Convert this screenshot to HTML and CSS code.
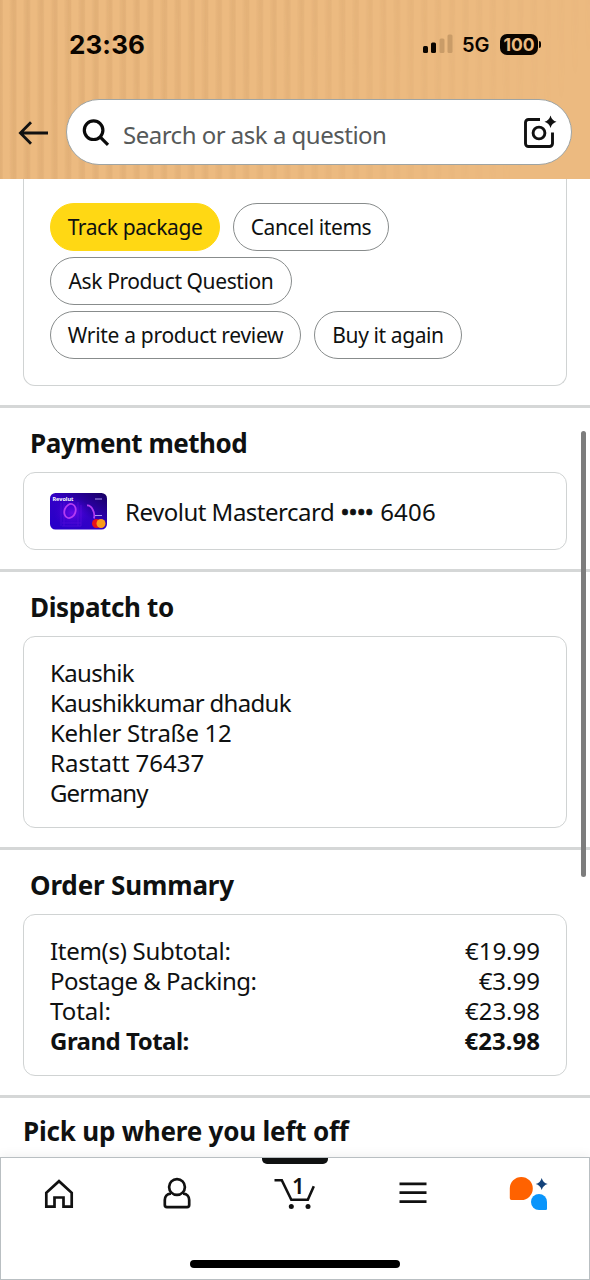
FILE: index.html
```html
<!DOCTYPE html>
<html lang="en">
<head>
<meta charset="utf-8">
<title>Order details</title>
<link rel="stylesheet" href="styles.css">
</head>
<body>
<div class="screen">
  <header class="header">
    <div class="status">
      <span class="clock">23:36</span>
      <div class="indicators">
        <svg class="signal" width="30" height="20" viewBox="0 0 30 20"><rect x="0" y="12" width="5" height="7" rx="1.5"/><rect x="8" y="8.500" width="5" height="10.500" rx="1.500"/><g fill="#c99c68"><rect x="16.500" y="4.500" width="5" height="14.500" rx="1.500"/><rect x="24.500" y="0.500" width="5" height="18.500" rx="1.500"/></g></svg>
        <span class="network">5G</span>
        <span class="battery">100</span><i class="battery-tip"></i>
      </div>
    </div>
    <div class="search-row">
      <svg class="back" width="30" height="24" viewBox="0 0 30 24"><path d="M13 1.200 2.400 12 13 22.800M2.400 12H30" fill="none" stroke="#111" stroke-width="2.800"/></svg>
      <div class="search">
        <svg class="lens" width="28" height="28" viewBox="0 0 28 28"><g fill="none" stroke="#0a0a0a" stroke-width="3.200"><circle cx="11.600" cy="11.200" r="9.300"/><path d="m17.800 17.600 8.200 8.200"/></g></svg>
        <span class="placeholder">Search or ask a question</span>
        <svg class="camera" width="34" height="34" viewBox="0 0 34 34"><g fill="none" stroke="#111" stroke-width="2.900"><path d="M17 4.500H5.500a3 3 0 0 0-3 3v21a3 3 0 0 0 3 3h21a3 3 0 0 0 3-3V17.500"/><circle cx="16" cy="18" r="5.900"/></g><path d="M27.500 0.500q1.300 5 6 6.300-4.700 1.300-6 6.300-1.300-5-6-6.300 4.700-1.300 6-6.300z" fill="#111"/></svg>
      </div>
    </div>
  </header>

  <main class="content">
    <div class="card actions">
      <div class="action-row"><button class="pill primary track">Track package</button><button class="pill cancel">Cancel items</button></div>
      <div class="action-row"><button class="pill ask">Ask Product Question</button></div>
      <div class="action-row"><button class="pill review">Write a product review</button><button class="pill again">Buy it again</button></div>
    </div>

    <section class="section">
      <h2 class="h-payment">Payment method</h2>
      <div class="card payment">
        <svg class="bankcard" width="58" height="37" viewBox="0 0 58 37">
          <defs>
            <linearGradient id="cardFill" x1="0" x2="1" y1="1" y2="0"><stop offset="0" stop-color="#2500c9"/><stop offset=".5" stop-color="#3400c6"/><stop offset="1" stop-color="#16005e"/></linearGradient>
            <radialGradient id="glow"><stop offset="0" stop-color="#6a08e8"/><stop offset="1" stop-color="#3a00d0" stop-opacity="0"/></radialGradient>
          </defs>
          <rect width="57" height="36.500" rx="5.500" fill="url(#cardFill)"/>
          <ellipse cx="22" cy="20" rx="18" ry="16" fill="url(#glow)"/>
          <path d="M11 10v23M14 9v24M28 9v24M31 12v21M12 30h19M12 33h19" stroke="#6412df" stroke-width=".7" opacity=".7"/>
          <ellipse cx="20" cy="18" rx="5.500" ry="7.200" transform="rotate(20 20 18)" fill="none" stroke="#b43cf2" stroke-width="1.800"/>
          <path d="M37 12.500c4.500-.5 8.500 7 7 13" fill="none" stroke="#b43cf2" stroke-width="1.800"/>
          <text x="2.500" y="7.800" class="brand">Revolut</text>
          <path d="M45 6h7M45 22.500h7" stroke="#a997ee" stroke-width="1"/>
          <circle cx="46.500" cy="30.500" r="4.500" fill="#e6111b"/><circle cx="51" cy="30.500" r="4.500" fill="#f99b19"/>
        </svg>
        <span class="card-name"><span class="tight-5">Revolut Mastercard</span> <span class="dots">••••</span> <span class="digits">6406</span></span>
      </div>
    </section>

    <section class="section">
      <h2 class="h-dispatch">Dispatch to</h2>
      <div class="card lines">
        <div><span class="tight-7">Kaushik</span></div>
        <div><span class="tight-7">Kaushikkumar dhaduk</span></div>
        <div><span class="tight-3">Kehler Straße 12</span></div>
        <div><span>Rastatt 76437</span></div>
        <div><span class="tight-8">Germany</span></div>
      </div>
    </section>

    <section class="section">
      <h2 class="h-summary">Order Summary</h2>
      <div class="card lines">
        <div><span class="tight-3">Item(s) Subtotal:</span><span>€19.99</span></div>
        <div><span class="tight-5">Postage &amp; Packing:</span><span>€3.99</span></div>
        <div><span>Total:</span><span>€23.98</span></div>
        <div class="grand"><span class="tight-5">Grand Total:</span><span>€23.98</span></div>
      </div>
    </section>

    <section class="section pickup">
      <h2 class="h-pickup">Pick up where you left off</h2>
    </section>
  </main>

  <nav class="tabs">
    <div class="tab"><svg width="40" height="40" viewBox="0 0 40 40"><path d="M7.300 33.700V19.800L20 8.200l12.700 11.600v13.900h-8.200V24.500h-9v9.200z" fill="none" stroke="#111" stroke-width="2.700"/></svg></div>
    <div class="tab"><svg width="40" height="40" viewBox="0 0 40 40"><g fill="none" stroke="#111" stroke-width="2.700"><circle cx="20" cy="14" r="7.900"/><path d="M14 20.600h-.5c-3.500.3-5.700 3-5.700 6.500v5a2.100 2.100 0 0 0 2.100 2.100h20.200a2.100 2.100 0 0 0 2.100-2.100v-5c0-3.500-2.200-6.200-5.700-6.500H26"/></g></svg></div>
    <div class="tab active"><svg width="44" height="40" viewBox="0 0 44 40"><path d="M1.500 7.300h7.300l9.500 19.400h16.500l6-13.400" fill="none" stroke="#111" stroke-width="2.600"/><circle cx="18.300" cy="33.400" r="2.500" fill="#111"/><circle cx="35" cy="33.400" r="2.500" fill="#111"/></svg><span class="count">1</span></div>
    <div class="tab"><svg width="40" height="40" viewBox="0 0 40 40"><path d="M6.500 10.800h27M6.500 19.700h27M6.500 28.700h27" stroke="#111" stroke-width="2.700"/></svg></div>
    <div class="tab assistant"><svg width="44" height="40" viewBox="0 0 44 40"><path d="M14.300 4A11.500 11.500 0 1 1 14.300 27H4.500q-1.700 0-1.700-1.700V15.500A11.500 11.500 0 0 1 14.300 4z" fill="#ff6200"/><path d="M32 21a8 8 0 0 1 8 8v6.700q0 1.300-1.300 1.300H32a8 8 0 0 1 0-16z" fill="#0a95fb"/><path d="M34.700 5q1.300 5 6 6-4.700 1.300-6 6-1.300-4.700-6-6 4.700-1 6-6z" fill="#12427a"/></svg></div>
    <i class="home-bar"></i>
  </nav>
  <i class="scroll-thumb"></i>
</div>
</body>
</html>
```

FILE: styles.css
```css
* { box-sizing: border-box; }
body { margin: 0; font-family: "Noto Sans", sans-serif; color: #0f1111; background: #fff; }
.screen { position: relative; display: flex; flex-direction: column; width: 590px; height: 1280px; overflow: hidden; }
svg { display: block; flex: none; }

.header { position: relative; flex: none; height: 179px; background: #ecba80; isolation: isolate; }
.header::before {
  content: ""; position: absolute; inset: 0; z-index: -1;
  background: repeating-linear-gradient(90deg, rgba(160,110,60,.14) 0, rgba(160,110,60,.12) 2px, transparent 3.5px, transparent 9px, rgba(160,110,60,.08) 11px, rgba(160,110,60,.14) 13.7px);
  -webkit-mask-image: linear-gradient(120deg, #000 0%, rgba(0,0,0,.75) 40%, rgba(0,0,0,.4) 65%, transparent 90%);
  mask-image: linear-gradient(120deg, #000 0%, rgba(0,0,0,.75) 40%, rgba(0,0,0,.4) 65%, transparent 90%);
}
.status { display: flex; align-items: center; justify-content: space-between; height: 99px; padding: 0 49px 11px 69px; font-family: Inter, sans-serif; color: #0a0500; }
.clock { font-size: 26px; font-weight: 700; letter-spacing: 0.1px; }
.indicators { display: flex; align-items: center; }
.signal { margin-right: 9px; fill: #0a0500; }
.network { width: 38px; padding-top: 1px; font-size: 20px; font-weight: 600; }
.battery { width: 38px; height: 21px; border-radius: 7px; background: #0a0500; color: #ecba80; font-size: 17.5px; font-weight: 700; line-height: 21px; text-align: center; }
.battery-tip { width: 2px; height: 7px; margin-left: 1px; border-radius: 0 2px 2px 0; background: #0a0500; }
.search-row { display: flex; align-items: center; padding: 0 18px 0 18px; }
.back { margin: 2px 18px 0 0; }
.search { flex: 1; display: flex; align-items: center; height: 66px; padding: 0 14px; border: 1.5px solid #9ea4a4; border-radius: 33px; background: #fff; }
.lens { margin: 2px 0 0 1px; }
.placeholder { flex: 1; margin-left: 13px; padding-top: 5px; font-size: 24px; letter-spacing: -0.5px; color: #565959; white-space: nowrap; }
.camera { margin-bottom: 1px; }

.content { flex: 1; min-height: 0; overflow: hidden; }
.card { margin: 0 23px; border: 1px solid #d0d3d3; border-radius: 12px; }
.actions { display: flex; flex-direction: column; gap: 6px; height: 207px; margin-bottom: 19px; padding: 24px 26px 0; border-top: 0; border-radius: 0 0 12px 12px; }
.action-row { display: flex; gap: 13px; }
.pill { height: 48px; padding: 0; border: 1.5px solid #888c8c; border-radius: 24px; background: #fff; color: #0f1111; font: 21px "Noto Sans", sans-serif; letter-spacing: -0.4px; white-space: nowrap; }
.primary { border-color: #ffd814; background: #ffd814; }
.track { width: 170px; }
.cancel { width: 156px; }
.ask { width: 242px; }
.review { width: 251px; letter-spacing: -0.3px; }
.again { width: 148px; }

.section { border-top: 3px solid #d5d7d7; padding-bottom: 19px; }
h2 { height: 64px; margin: 0; padding: 15px 0 0 30px; font-size: 26px; line-height: 40px; font-weight: 700; white-space: nowrap; }
.h-payment { letter-spacing: -0.5px; }
.h-dispatch { letter-spacing: -0.35px; }
.h-summary { letter-spacing: -0.15px; }
.h-pickup { padding: 13px 0 0 23px; letter-spacing: -0.2px; }
.payment { display: flex; align-items: center; gap: 17px; height: 78px; padding-left: 26px; font-size: 24px; white-space: nowrap; }
.dots { letter-spacing: -0.9px; -webkit-text-stroke: 0.7px; }
.digits { letter-spacing: 0.2px; margin-left: 1px; }
.brand { font: 700 5.5px "Noto Sans", sans-serif; fill: #fff; }
.lines { padding: 21px 26px 19px; font-size: 24px; line-height: 30px; }
.lines div { display: flex; justify-content: space-between; }
.tight-3 { letter-spacing: -0.3px; }
.tight-5 { letter-spacing: -0.5px; }
.tight-7 { letter-spacing: -0.67px; }
.tight-8 { letter-spacing: -0.9px; }
.grand { font-weight: 700; }

.tabs { position: relative; flex: none; display: grid; grid-template-columns: repeat(5, 118px); height: 123px; border: 1.5px solid #b9bfc2; background: #fff; box-shadow: 0 -2px 10px rgba(0,0,0,.06); }
.tab { display: flex; justify-content: center; padding: 15px 2px 0 0; }
.assistant { padding-right: 6px; }
.active { position: relative; }
.active::before { content: ""; position: absolute; top: 0; left: 25px; width: 66px; height: 6px; border-radius: 0 0 5px 5px; background: #0f1111; }
.count { position: absolute; left: 55px; top: 15px; font-size: 22px; font-weight: 600; line-height: 24px; color: #0f1111; }
.home-bar { position: absolute; left: 189px; bottom: 11px; width: 210px; height: 8px; border-radius: 4px; background: #000; }
.scroll-thumb { position: absolute; left: 581px; top: 431px; width: 5px; height: 446px; border-radius: 3px; background: #7d7d7d; }
```
